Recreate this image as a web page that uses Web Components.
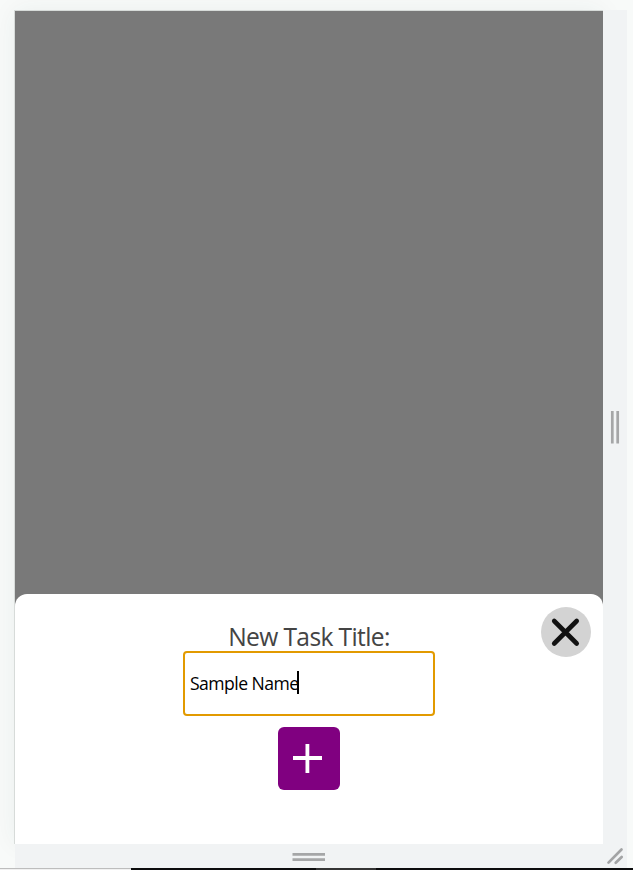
<!DOCTYPE html>
<html lang="en">
<head>
<meta charset="utf-8">
<title>New Task</title>
<style>
html,body{margin:0;height:100%;overflow:hidden;background:#f8faf9}
</style>
</head>
<body>
<device-preview>
  <task-sheet>
    <close-button></close-button>
    <task-field label="New Task Title:" value="Sample Name"></task-field>
    <add-button></add-button>
  </task-sheet>
</device-preview>
<script>
const define = (name, html, setup) => customElements.define(name, class extends HTMLElement {
  connectedCallback() {
    if (this.shadowRoot) return;
    this.attachShadow({mode: 'open'}).innerHTML = html;
    if (setup) setup(this);
  }
});

define('resize-handle', `
<style>
:host{display:flex;align-items:center;justify-content:center;background:#f1f3f4}
svg{display:block;flex:none}
:host([kind=corner]) .bars,:host(:not([kind=corner])) .corner{display:none}
:host([kind=bottom]) .bars{transform:rotate(90deg)}
</style>
<svg class="bars" width="34" height="34" viewBox="0 0 34 34"><path d="M14.3 1v32.5M19.7 1v32.5" stroke="#a5a6a7" stroke-width="2.7"/></svg>
<svg class="corner" width="24" height="24" viewBox="0 0 24 24"><path d="M5.5 18.6 18.5 5.5M12.7 18.8 18.7 13" stroke="#a3a4a5" stroke-width="2.7" stroke-linecap="round"/></svg>`);

define('status-strip', `
<style>
:host{display:flex;height:2px;background:#0c0c0d}
i{display:block;height:2px}
.a{width:131px;background:linear-gradient(#bdbdbd 50%,#f1f1f1 50%)}
.b{width:185px}
.c{width:60px;background:#343434}
</style><i class="a"></i><i class="b"></i><i class="c"></i>`);

define('device-preview', `
<style>
:host{display:flex;flex-direction:column;width:633px;height:870px;overflow:hidden}
.stage{height:858px;padding:10px 0 0 14px;box-sizing:border-box;flex:1;display:grid;grid-template-columns:589px 24px;grid-template-rows:834px 24px}
.screen{box-sizing:border-box;border:solid #d7dbd9;border-width:1px 0 0 1px;background:#797979;display:flex;flex-direction:column;justify-content:flex-end;box-shadow:0 0 24px rgba(40,70,60,.06)}
resize-handle{position:relative}
resize-handle[kind=bottom]{margin-left:1px;padding-top:1px}
</style>
<div class="stage">
  <div class="screen"><slot></slot></div>
  <resize-handle kind="right"></resize-handle>
  <resize-handle kind="bottom"></resize-handle>
  <resize-handle kind="corner"></resize-handle>
</div>
<status-strip></status-strip>`);

define('task-sheet', `
<style>
:host{display:flex;flex-direction:column;align-items:center;position:relative;height:250px;box-sizing:border-box;padding-top:27px;background:#fff;border-radius:12px 12px 0 0}
</style><slot></slot>`);

define('close-button', `
<style>
:host{position:absolute;top:13px;right:12px;display:block;width:50px;height:50px}
button{display:block;width:50px;height:50px;padding:0;border:0;border-radius:50%;background:#d3d3d3}
svg{display:block}
</style>
<button aria-label="Close"><svg width="50" height="50" viewBox="0 0 50 50"><path d="M13.2 14 35.7 36.5M35.7 14 13.2 36.5" stroke="#111" stroke-width="4.6" stroke-linecap="round"/></svg></button>`);

define('task-field', `
<style>
:host{display:flex;flex-direction:column;align-items:center;font-family:"Open Sans","Noto Sans",sans-serif}
.label{height:30px;line-height:31px;font-size:24.6px;letter-spacing:-.62px;color:#444;white-space:nowrap}
.box{box-sizing:border-box;width:252px;height:65px;border:2px solid #e29a00;border-radius:4px;background:#fff;display:flex;align-items:center;padding-left:5px;font-size:17.6px;color:#000;white-space:nowrap}
.value{width:109px;letter-spacing:-.55px;margin-top:-2px}
.caret{width:2px;height:23px;background:#000;margin-left:-2px;margin-top:-2px}
</style>
<div class="label"></div>
<div class="box"><span class="value"></span><i class="caret"></i></div>`, el => {
  el.shadowRoot.querySelector('.label').textContent = el.getAttribute('label');
  el.shadowRoot.querySelector('.value').textContent = el.getAttribute('value');
});

define('add-button', `
<style>
:host{display:block;margin-top:11px}
button{display:block;width:62px;height:63px;padding:0;border:0;border-radius:6px;background:#800080}
svg{display:block}
</style>
<button aria-label="Add"><svg width="62" height="63" viewBox="0 0 62 63"><path d="M15 31H44M29.4 17V46" stroke="#fff" stroke-width="3.8"/></svg></button>`);
</script>
</body>
</html>
